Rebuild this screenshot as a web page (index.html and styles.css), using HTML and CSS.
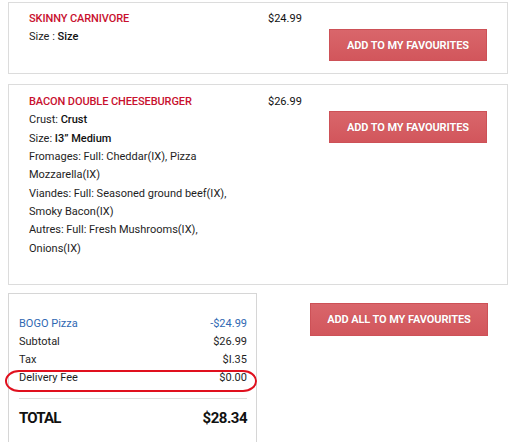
FILE: index.html
```html
<!DOCTYPE html>
<html>
<head>
<meta charset="utf-8">
<link rel="stylesheet" href="styles.css">
</head>
<body>
<div class="page">
  <div class="card">
    <div class="info">
      <div class="name">SKINNY CARNIVORE</div>
      <div class="line">Size : <b>Size</b></div>
    </div>
    <div class="side">
      <div class="price">$24.99</div>
      <button class="btn">ADD TO MY FAVOURITES</button>
    </div>
  </div>

  <div class="card card-tall">
    <div class="info">
      <div class="name">BACON DOUBLE CHEESEBURGER</div>
      <div class="line">Crust: <b>Crust</b></div>
      <div class="line">Size: <b>I3” Medium</b></div>
      <div class="line">Fromages: Full: Cheddar(IX), Pizza Mozzarella(IX)</div>
      <div class="line">Viandes: Full: Seasoned ground beef(IX), Smoky Bacon(IX)</div>
      <div class="line">Autres: Full: Fresh Mushrooms(IX), Onions(IX)</div>
    </div>
    <div class="side">
      <div class="price">$26.99</div>
      <button class="btn">ADD TO MY FAVOURITES</button>
    </div>
  </div>

  <div class="bottom">
    <div class="summary">
      <div class="row promo"><span>BOGO Pizza</span><span>-$24.99</span></div>
      <div class="row"><span>Subtotal</span><span>$26.99</span></div>
      <div class="row"><span>Tax</span><span>$I.35</span></div>
      <div class="row"><span>Delivery Fee</span><span>$0.00</span></div>
      <div class="divider"></div>
      <div class="row total"><span>TOTAL</span><span>$28.34</span></div>
      <div class="highlight"></div>
    </div>
    <div class="bottom-side">
      <button class="btn btn-all">ADD ALL TO MY FAVOURITES</button>
    </div>
  </div>
</div>
</body>
</html>
```

FILE: styles.css
```css
* { box-sizing: border-box; }
html, body { margin: 0; padding: 0; background: #fff; }
body {
  font-family: Roboto, "Liberation Sans", Arial, sans-serif;
  color: #222;
  overflow: hidden;
}
.page {
  padding: 2px 4px 0 8px;
  display: flex;
  flex-direction: column;
}
.card {
  border: 1px solid #dcdcdc;
  display: grid;
  grid-template-columns: 239px 1fr;
  padding: 7px 20px 13px 20px;
  height: 72px;
  margin-bottom: 10px;
}
.card-tall {
  height: 201px;
  margin-bottom: 8px;
  padding-top: 8px;
}
.info {
  font-size: 11px;
  line-height: 18.33px;
  max-width: 212px;
  color: #1e1e1e;
}
.name {
  font-size: 11px;
  font-weight: 500;
  color: #c8102e;
  letter-spacing: -0.1px;
  white-space: nowrap;
}
.line b { font-weight: 500; color: #111; }
.side {
  display: flex;
  flex-direction: column;
  align-items: flex-end;
}
.price {
  align-self: flex-start;
  font-size: 11px;
  line-height: 18.33px;
  color: #111;
}
.btn {
  margin-top: 1px;
  width: 158px;
  height: 32px;
  border: 1px solid #cd5157;
  background: linear-gradient(#d9666b, #d2565c);
  color: #fff;
  font-family: Roboto, "Liberation Sans", Arial, sans-serif;
  font-weight: 700;
  font-size: 11px;
  padding: 0;
  letter-spacing: -0.1px;
  text-shadow: 0 0 1px rgba(120, 20, 20, 0.3);
}
.card-tall .btn { margin-top: 0; }
.bottom {
  display: flex;
}
.summary {
  position: relative;
  width: 249px;
  height: 160px;
  border: 1px solid #d6d6d6;
  border-bottom: none;
  padding: 21px 9px 0 10px;
  font-size: 11px;
  line-height: 18px;
}
.row {
  display: flex;
  justify-content: space-between;
  color: #1e1e1e;
}
.promo { color: #2f68b2; }
.divider {
  height: 1px;
  background: #dedede;
  margin: 11px 0 9px;
}
.total {
  font-size: 15px;
  line-height: 20px;
  font-weight: 700;
  color: #111;
  letter-spacing: -0.5px;
}
.total span:first-child { letter-spacing: -0.8px; }
.highlight {
  position: absolute;
  left: -4px;
  top: 76px;
  width: 252px;
  height: 22px;
  border: 2px solid #e0101e;
  border-radius: 14px / 11px;
}
.bottom-side {
  flex: 1;
  display: flex;
  justify-content: flex-end;
  align-items: flex-start;
  padding: 10px 20px 0 0;
}
.btn-all {
  margin-top: 0;
  width: 178px;
  height: 33px;
}
```
